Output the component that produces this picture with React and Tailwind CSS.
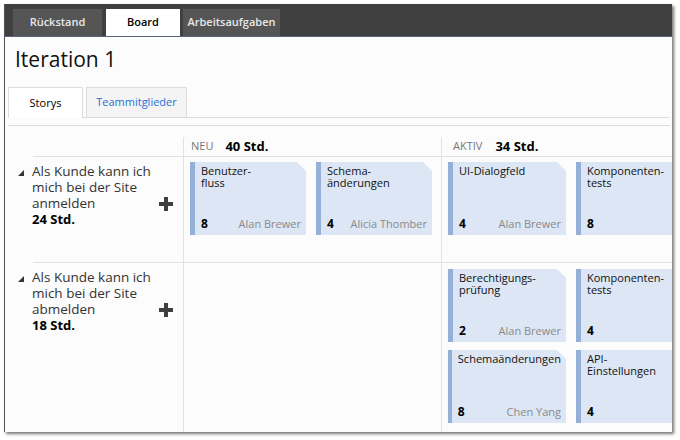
import React from "react";

const font = { fontFamily: '"Open Sans", "Noto Sans", sans-serif' };

function Plus() {
  return (
    <svg width="14" height="14" viewBox="0 0 14 14">
      <path d="M5 0h4v5h5v4H9v5H5V9H0V5h5z" fill="#3f3f3f" />
    </svg>
  );
}

function Caret() {
  return (
    <svg width="6" height="6" viewBox="0 0 6 6">
      <polygon points="6,0 6,6 0,6" fill="#333" />
    </svg>
  );
}

function Card({ title, num, who, fold = true, width = "w-[116px]" }) {
  return (
    <div
      className={`${width} h-[73px] shrink-0 flex bg-[#dce6f4] ${
        fold ? "[clip-path:polygon(0_0,calc(100%_-_9px)_0,100%_9px,100%_100%,0_100%)]" : ""
      }`}
    >
      <div className="w-[5px] bg-[#94b0d8]" />
      <div className="flex-1 flex flex-col pl-[6px] pr-[5px] pt-[3px] pb-[4px]">
        <div className="text-[11px] leading-[12px] text-[#111] whitespace-pre-line">{title}</div>
        <div className="mt-auto flex items-end justify-between">
          <span className="text-[12px] font-bold text-black leading-[14px]">{num}</span>
          <span className="text-[11px] text-[#8a8a8a] leading-[14px]">{who}</span>
        </div>
      </div>
    </div>
  );
}

function Story({ lines, hours }) {
  return (
    <div className="flex pl-[13px] pt-[6px]">
      <div className="pt-[7px] w-[14px]">
        <Caret />
      </div>
      <div className="flex-1 text-[13.5px] leading-[16px] text-[#333] whitespace-nowrap">
        {lines.map((l) => (
          <div key={l}>{l}</div>
        ))}
        <div className="font-bold text-[13px] text-black">{hours}</div>
      </div>
      <div className="pt-[34px] pr-[10px]">
        <Plus />
      </div>
    </div>
  );
}

export default function App() {
  return (
    <div className="w-[680px] h-[440px] bg-white pt-[4px] pl-[4px]" style={font}>
      <div className="w-[668px] h-[428px] overflow-hidden flex flex-col bg-[#fcfcfc] border-l border-[#555] shadow-[2px_2px_3px_rgba(0,0,0,0.55)]">
        {/* top bar */}
        <div className="h-[33px] shrink-0 bg-[#404040] flex items-end pl-[8px] border-b border-[#5a6478]">
          <div className="w-[89px] h-[27px] bg-[#555] text-[#e8e8e8] text-[11px] font-semibold flex items-center justify-center">
            Rückstand
          </div>
          <div className="w-[74px] h-[27px] ml-[4px] bg-white text-black text-[11px] font-semibold flex items-center justify-center">
            Board
          </div>
          <div className="w-[97px] h-[27px] ml-[3px] bg-[#555] text-[#e8e8e8] text-[11px] font-semibold flex items-center justify-center">
            Arbeitsaufgaben
          </div>
        </div>

        <div className="pl-[10px] pt-[7px] h-[50px] text-[21px] text-[#111] leading-[30px]">Iteration 1</div>

        {/* sub tabs */}
        <div className="ml-[3px] mr-[3px] flex h-[31px] border-b border-[#dcdcdc]">
          <div className="w-[75px] h-[31px] bg-white border border-b-0 border-[#dcdcdc] text-[11px] text-black flex items-center justify-center">
            Storys
          </div>
          <div className="w-[101px] h-[30px] ml-[3px] bg-[#f4f4f4] border border-b-0 border-[#dcdcdc] text-[11px] text-[#1f6fd4] flex items-center justify-center">
            Teammitglieder
          </div>
        </div>
        <div className="ml-[3px] mr-[2px] mt-[7px] border-b border-[#dcdcdc]" />

        {/* board */}
        <div className="flex-1 flex flex-col pt-[11px]">
          <div className="flex h-[20px]">
            <div className="w-[178px] shrink-0 pl-[28px] flex flex-col">
              <div className="mt-auto border-b border-[#e2e2e2]" />
            </div>
            <div className="w-[258px] shrink-0 border-l border-[#e2e2e2] border-b pl-[7px] flex items-center gap-[12px]">
              <span className="text-[11px] text-[#777]">NEU</span>
              <span className="text-[13px] font-bold text-black">40 Std.</span>
            </div>
            <div className="flex-1 border-l border-b border-[#e2e2e2] pl-[11px] flex items-center gap-[13px]">
              <span className="text-[11px] text-[#777]">AKTIV</span>
              <span className="text-[13px] font-bold text-black">34 Std.</span>
            </div>
          </div>

          <div className="flex h-[106px]">
            <div className="w-[178px] shrink-0 flex flex-col">
              <Story lines={["Als Kunde kann ich", "mich bei der Site", "anmelden"]} hours="24 Std." />
              <div className="mt-auto ml-[28px] border-b border-[#e2e2e2]" />
            </div>
            <div className="w-[258px] shrink-0 border-l border-b border-[#e2e2e2] pl-[6px] pt-[5px] flex gap-[10px]">
              <Card title={"Benutzer-\nfluss"} num="8" who="Alan Brewer" />
              <Card title={"Schema-\nänderungen"} num="4" who="Alicia Thomber" />
            </div>
            <div className="flex-1 border-l border-b border-[#e2e2e2] pl-[6px] pt-[5px] flex gap-[10px] overflow-hidden">
              <Card title="UI-Dialogfeld" num="4" who="Alan Brewer" width="w-[118px]" />
              <Card title={"Komponenten-\ntests"} num="8" who="" fold={false} width="w-[118px]" />
            </div>
          </div>

          <div className="flex flex-1">
            <div className="w-[178px] shrink-0">
              <Story lines={["Als Kunde kann ich", "mich bei der Site", "abmelden"]} hours="18 Std." />
            </div>
            <div className="w-[258px] shrink-0 border-l border-[#e2e2e2]" />
            <div className="flex-1 border-l border-[#e2e2e2] pl-[6px] pt-[6px] flex flex-col gap-[8px] overflow-hidden">
              <div className="flex gap-[10px]">
                <Card title={"Berechtigungs-\nprüfung"} num="2" who="Alan Brewer" width="w-[118px]" />
                <Card title={"Komponenten-\ntests"} num="4" who="" fold={false} width="w-[118px]" />
              </div>
              <div className="flex gap-[10px]">
                <Card title="Schemaänderungen" num="8" who="Chen Yang" width="w-[118px]" />
                <Card title={"API-\nEinstellungen"} num="4" who="" fold={false} width="w-[118px]" />
              </div>
            </div>
          </div>
        </div>
      </div>
    </div>
  );
}
